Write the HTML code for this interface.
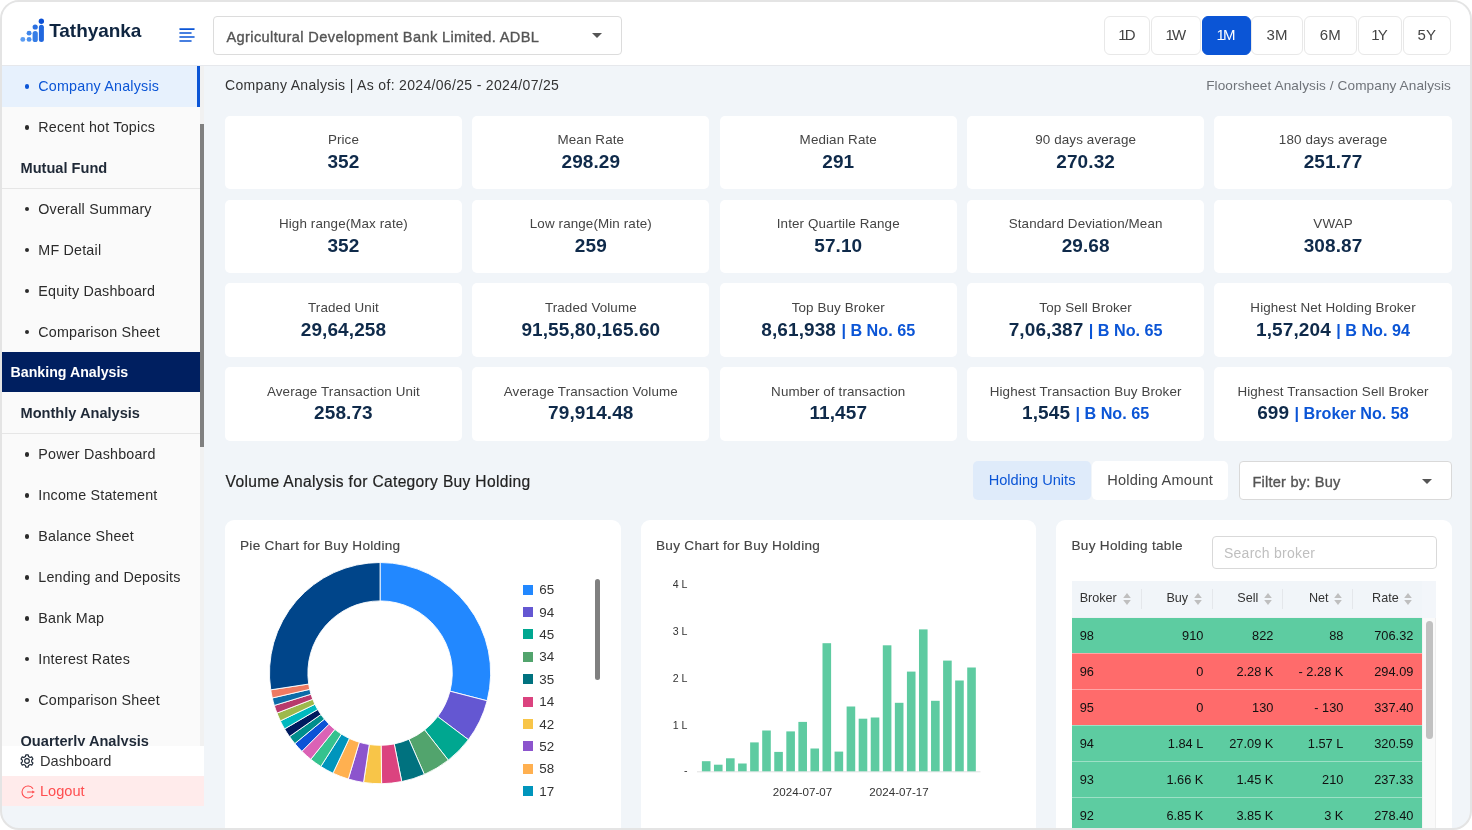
<!DOCTYPE html>
<html lang="en">
<head>
<meta charset="utf-8">
<title>Tathyanka - Company Analysis</title>
<style>
*{box-sizing:border-box;margin:0;padding:0}
html,body{width:1472px;height:830px;overflow:hidden;background:#fff;font-family:"Liberation Sans",sans-serif;color:#333}
#frame{position:absolute;left:0;top:0;width:1472px;height:830px;border:2px solid #e4e4e4;border-radius:19px;overflow:hidden;background:#f1f5f9}
#inner{position:absolute;left:-2px;top:-2px;width:1472px;height:830px;will-change:transform}
/* header */
#hdr{position:absolute;left:0;top:0;width:1472px;height:66px;background:#fff;border-bottom:1px solid #e6e8ec}
#logo{position:absolute;left:20px;top:17px;width:24px;height:26px}
#brand{position:absolute;left:49.2px;top:18.9px;font-weight:bold;font-size:19px;line-height:24px;color:#0f2540;letter-spacing:-0.05px;white-space:nowrap}
#burger{position:absolute;left:178.6px;top:28px;width:16px;height:14px;overflow:visible}
#sel{position:absolute;left:213px;top:16px;width:409px;height:38.6px;border:1px solid #dcdcdc;border-radius:4px;background:#fff}
#sel span{position:absolute;left:12.5px;top:10.5px;font-size:14.6px;line-height:18px;color:#555;-webkit-text-stroke:.35px #555;letter-spacing:.37px;white-space:nowrap}
.caret{position:absolute;width:0;height:0;border-left:5px solid transparent;border-right:5px solid transparent;border-top:5px solid #555}
.tb{position:absolute;top:15.7px;height:39.2px;border:1.2px solid #e8e8e8;border-radius:6px;background:#fff;font-size:15px;line-height:36.6px;text-align:center;color:#444}.tb u{text-decoration:none;letter-spacing:-1.9px}
.tb.on{background:#0b55d6;border-color:#0b55d6;color:#fff}
/* sidebar */
#side{position:absolute;left:2px;top:66px;width:198.3px;height:680px;background:#fafafa;overflow:hidden}
.it{position:relative;letter-spacing:.2px;height:40.93px;font-size:14.3px;line-height:41.6px;color:#2b2b2b;white-space:nowrap;padding-left:36.3px}
.it:before{content:"";position:absolute;left:22.9px;top:18.2px;width:4.4px;height:4.4px;border-radius:50%;background:#2b2b2b}
.it.act{background:#e7f1fd;color:#0b55d6}
.it.act:before{background:#0b55d6}
.it.act:after{content:"";position:absolute;right:0;top:0;width:3.7px;height:100%;background:#0b55d6}
.sec{height:40.93px;font-size:14.6px;line-height:40.95px;font-weight:bold;color:#1f2937;padding-left:18.5px;border-bottom:1px solid #e6e6e6;white-space:nowrap}
.grp{height:39.7px;margin-top:-.4px;margin-bottom:1.63px;font-size:14.2px;line-height:41.7px;font-weight:bold;color:#fff;background:#001f60;padding-left:8.5px;white-space:nowrap}
#strack{position:absolute;left:200.3px;top:66px;width:3.3px;height:680px;background:#f1f1f1}#sthumb{position:absolute;left:200.3px;top:124px;width:3.4px;height:322.7px;background:#808080}
#dash{position:absolute;left:2px;top:745.6px;width:201.5px;height:30.6px;background:#fff;font-size:14.6px;line-height:31.4px;color:#333;padding-left:38px}
#logout{position:absolute;left:2px;top:776.2px;width:201.5px;height:30.2px;background:#ffebeb;font-size:14.6px;line-height:31px;color:#ff4d4f;padding-left:38px}
#dash svg{position:absolute;left:18.4px;top:8.9px}#logout svg{position:absolute;left:18.6px;top:8.4px}
/* main */
#ttl{position:absolute;left:225px;top:75.9px;letter-spacing:.33px;font-size:14px;line-height:18px;color:#333;white-space:nowrap}
#crumb{position:absolute;right:21px;top:76.5px;letter-spacing:.1px;font-size:13.6px;line-height:18px;color:#6f7379;white-space:nowrap}
.card{position:absolute;width:237.3px;height:73.7px;background:#fff;border-radius:5px;text-align:center}
.card .l{position:absolute;left:0;width:100%;top:15.5px;letter-spacing:.12px;font-size:13.4px;line-height:18px;color:#444;white-space:nowrap}
.card .v{position:absolute;left:0;width:100%;top:34.2px;letter-spacing:.1px;font-size:19px;line-height:24px;font-weight:bold;color:#0f2a4a;white-space:nowrap}
.card .v b{color:#0b55d6;font-size:16.2px;letter-spacing:0}

/* lower */
#vt{position:absolute;left:225.6px;top:471.7px;letter-spacing:.32px;-webkit-text-stroke:.2px #222;font-size:15.6px;line-height:20px;color:#222;white-space:nowrap}
#tab1{position:absolute;left:973px;top:461.3px;width:118.1px;height:38.7px;border-radius:5px;background:#dfebfa;color:#0b55d6;font-size:14.6px;line-height:38.7px;text-align:center;white-space:nowrap}
#tab2{letter-spacing:.2px;position:absolute;left:1091.8px;top:461.3px;width:136.7px;height:38.7px;border-radius:5px;background:#fff;color:#444;font-size:14.6px;line-height:38.7px;text-align:center;white-space:nowrap}
#flt{position:absolute;left:1239px;top:461.3px;width:212.5px;height:38.7px;border:1px solid #d9d9d9;border-radius:4px;background:#fff}
#flt span{position:absolute;left:12.5px;top:10.5px;font-size:14.6px;line-height:18px;color:#555;-webkit-text-stroke:.35px #555;letter-spacing:.2px;white-space:nowrap}
.pc{position:absolute;top:520.4px;width:395.5px;height:330px;background:#fff;border-radius:9px}
.pt{position:absolute;top:536.8px;letter-spacing:.28px;-webkit-text-stroke:.15px #444;font-size:13.6px;line-height:18px;color:#444;white-space:nowrap}
.lsq{position:absolute;left:522.7px;width:10px;height:10px}
.ltx{position:absolute;left:539.3px;font-size:13.4px;line-height:16px;color:#333;white-space:nowrap}
#lscroll{position:absolute;left:595px;top:578.5px;width:5.3px;height:101.5px;border-radius:2.6px;background:#808080}
.yl{position:absolute;left:640px;width:47.5px;text-align:right;font-size:10.6px;line-height:14px;color:#333;white-space:nowrap}
.xl{position:absolute;top:784.5px;width:80px;text-align:center;font-size:11.6px;line-height:14px;color:#333;white-space:nowrap}
#srch{position:absolute;left:1211.5px;top:535.5px;width:225px;height:33px;border:1px solid #d9d9d9;border-radius:4px;background:#fff}
#srch span{position:absolute;left:11.5px;top:7px;letter-spacing:.25px;font-size:14px;line-height:18px;color:#bfbfbf;white-space:nowrap}
#thead{position:absolute;left:1071.7px;top:581.1px;width:364.6px;height:36.5px;background:#f1f5f9;border-right:14.3px solid #f3f6fa}
.th{position:absolute;top:581.1px;width:70.2px;height:36.5px;font-size:12.6px;line-height:35px;color:#333;white-space:nowrap}
.th.l span{position:absolute;left:8px}
.th.r span{position:absolute;right:24px}
.th .srt{position:absolute;right:10.5px;top:11.6px}
.thd{position:absolute;top:588.5px;width:1px;height:20px;background:#e4e7eb}
#tscroll{position:absolute;left:1421.9px;top:617.6px;width:14.4px;height:220px;background:#fafafa;border-left:1px solid #f3f3f3;border-right:1px solid #efefef}
#tscroll i{position:absolute;left:3.2px;top:3.5px;width:7.2px;height:117.5px;border-radius:3.6px;background:#c1c1c1}
.tr{position:absolute;left:1071.7px;width:350.2px;height:35.85px;font-size:12.8px;line-height:35.4px;color:#111;border-top:1px solid rgba(255,255,255,.4);white-space:nowrap}
.tr.g{background:#5dcca1}
.tr.r{background:#ff6b6b}
.tr span{position:absolute;top:0}
.tr .c0{left:8px}
.tr .c1{right:218.5px}
.tr .c2{right:148.5px}
.tr .c3{right:78.5px}
.tr .c4{right:8.5px}
</style>
</head>
<body>
<div id="frame"><div id="inner">

<div id="hdr">
  <svg id="logo" viewBox="0 0 24 26"><circle cx="2.8" cy="22.4" r="2.45" fill="#5a9cf3"/><circle cx="9.1" cy="22.4" r="2.45" fill="#4a90ee"/><circle cx="9.1" cy="16.15" r="2.45" fill="#3f86ea"/><rect x="12.6" y="14" width="5.2" height="11.1" rx="2.6" fill="#357de6"/><circle cx="15.2" cy="10" r="2.6" fill="#2a6fe1"/><rect x="18.9" y="7.7" width="5" height="17.4" rx="2.5" fill="#2167de"/><circle cx="21.4" cy="4.2" r="2.7" fill="#0a4fd5"/></svg>
  <div id="brand">Tathyanka</div>
  <svg id="burger" viewBox="0 0 16 14"><g stroke="#0b55d6" stroke-width="1.6" stroke-linecap="round"><path d="M1 1.1H15M1 5.05H12M1 9H15M1 12.95H12"/></g></svg>
  <div id="sel"><span>Agricultural Development Bank Limited. ADBL</span><i class="caret" style="left:378.2px;top:16.2px"></i></div>
  <div class="tb" style="left:1103.6px;width:46.5px"><u>1</u>D</div>
  <div class="tb" style="left:1150.5px;width:50.8px"><u>1</u>W</div>
  <div class="tb on" style="left:1201.6px;width:49px"><u>1</u>M</div>
  <div class="tb" style="left:1251px;width:52px">3M</div>
  <div class="tb" style="left:1304px;width:52.5px">6M</div>
  <div class="tb" style="left:1357.5px;width:44px"><u>1</u>Y</div>
  <div class="tb" style="left:1402.5px;width:48.5px">5Y</div>
</div>

<div id="side">
  <div class="it act">Company Analysis</div>
  <div class="it">Recent hot Topics</div>
  <div class="sec">Mutual Fund</div>
  <div class="it">Overall Summary</div>
  <div class="it">MF Detail</div>
  <div class="it">Equity Dashboard</div>
  <div class="it">Comparison Sheet</div>
  <div class="grp">Banking Analysis</div>
  <div class="sec">Monthly Analysis</div>
  <div class="it">Power Dashboard</div>
  <div class="it">Income Statement</div>
  <div class="it">Balance Sheet</div>
  <div class="it">Lending and Deposits</div>
  <div class="it">Bank Map</div>
  <div class="it">Interest Rates</div>
  <div class="it">Comparison Sheet</div>
  <div class="sec" style="border:0">Quarterly Analysis</div>
</div>
<div id="strack"></div><div id="sthumb"></div>
<div id="dash"><svg width="14" height="14" viewBox="0 0 14 14" fill="none" stroke="#1f2937" stroke-width="1.15" stroke-linejoin="round"><path d="M5.45 2.51L5.80 0.82L8.20 0.82L8.55 2.51L10.12 3.42L11.75 2.87L12.96 4.95L11.66 6.09L11.66 7.91L12.96 9.05L11.75 11.13L10.12 10.58L8.55 11.49L8.20 13.18L5.80 13.18L5.45 11.49L3.88 10.58L2.25 11.13L1.04 9.05L2.34 7.91L2.34 6.09L1.04 4.95L2.25 2.87L3.88 3.42Z"/><circle cx="7" cy="7" r="2.35"/></svg>Dashboard</div>
<div id="logout"><svg width="15" height="14" viewBox="0 0 15 14" fill="none" stroke="#ff4d4f" stroke-width="1.1" stroke-linecap="round"><path d="M11.73 3.31A6.0 6.0 0 1 0 11.73 10.69"/><path d="M6.5 7H12"/><path d="M11.2 5.4L14 7L11.2 8.6Z" fill="#ff4d4f" stroke="none"/></svg>Logout</div>

<div id="ttl">Company Analysis | As of: 2024/06/25 - 2024/07/25</div>
<div id="crumb">Floorsheet Analysis / Company Analysis</div>

<div class="card" style="left:224.8px;top:115.8px"><div class="l">Price</div><div class="v">352</div></div>
<div class="card" style="left:472.2px;top:115.8px"><div class="l">Mean Rate</div><div class="v">298.29</div></div>
<div class="card" style="left:719.6px;top:115.8px"><div class="l">Median Rate</div><div class="v">291</div></div>
<div class="card" style="left:967.0px;top:115.8px"><div class="l">90 days average</div><div class="v">270.32</div></div>
<div class="card" style="left:1214.4px;top:115.8px"><div class="l">180 days average</div><div class="v">251.77</div></div>
<div class="card" style="left:224.8px;top:199.6px"><div class="l">High range(Max rate)</div><div class="v">352</div></div>
<div class="card" style="left:472.2px;top:199.6px"><div class="l">Low range(Min rate)</div><div class="v">259</div></div>
<div class="card" style="left:719.6px;top:199.6px"><div class="l">Inter Quartile Range</div><div class="v">57.10</div></div>
<div class="card" style="left:967.0px;top:199.6px"><div class="l">Standard Deviation/Mean</div><div class="v">29.68</div></div>
<div class="card" style="left:1214.4px;top:199.6px"><div class="l">VWAP</div><div class="v">308.87</div></div>
<div class="card" style="left:224.8px;top:283.4px"><div class="l">Traded Unit</div><div class="v">29,64,258</div></div>
<div class="card" style="left:472.2px;top:283.4px"><div class="l">Traded Volume</div><div class="v">91,55,80,165.60</div></div>
<div class="card" style="left:719.6px;top:283.4px"><div class="l">Top Buy Broker</div><div class="v">8,61,938 <b>| B No. 65</b></div></div>
<div class="card" style="left:967.0px;top:283.4px"><div class="l">Top Sell Broker</div><div class="v">7,06,387 <b>| B No. 65</b></div></div>
<div class="card" style="left:1214.4px;top:283.4px"><div class="l">Highest Net Holding Broker</div><div class="v">1,57,204 <b>| B No. 94</b></div></div>
<div class="card" style="left:224.8px;top:367.2px"><div class="l">Average Transaction Unit</div><div class="v">258.73</div></div>
<div class="card" style="left:472.2px;top:367.2px"><div class="l">Average Transaction Volume</div><div class="v">79,914.48</div></div>
<div class="card" style="left:719.6px;top:367.2px"><div class="l">Number of transaction</div><div class="v">11,457</div></div>
<div class="card" style="left:967.0px;top:367.2px"><div class="l">Highest Transaction Buy Broker</div><div class="v">1,545 <b>| B No. 65</b></div></div>
<div class="card" style="left:1214.4px;top:367.2px"><div class="l">Highest Transaction Sell Broker</div><div class="v">699 <b>| Broker No. 58</b></div></div>


<div id="vt">Volume Analysis for Category Buy Holding</div>
<div id="tab1">Holding Units</div><div id="tab2">Holding Amount</div>
<div id="flt"><span>Filter by: Buy</span><i class="caret" style="left:182.2px;top:17px"></i></div>
<div class="pc" style="left:225px"></div><div class="pc" style="left:640.5px"></div><div class="pc" style="left:1056px"></div>
<div class="pt" style="left:240px">Pie Chart for Buy Holding</div>
<div class="pt" style="left:656px">Buy Chart for Buy Holding</div>
<div class="pt" style="left:1071.5px">Buy Holding table</div>
<svg id="donut" width="1472" height="830" style="position:absolute;left:0;top:0" stroke="#fff" stroke-width="0.9" stroke-linejoin="round"><path d="M380.07 562.50A110.6 110.6 0 0 1 487.15 700.79L449.97 691.18A72.2 72.2 0 0 0 380.07 600.90Z" fill="#2288ff"/><path d="M487.15 700.79A110.6 110.6 0 0 1 468.40 739.66L437.73 716.55A72.2 72.2 0 0 0 449.97 691.18Z" fill="#6457d2"/><path d="M468.40 739.66A110.6 110.6 0 0 1 448.31 760.14L424.62 729.92A72.2 72.2 0 0 0 437.73 716.55Z" fill="#00a790"/><path d="M448.31 760.14A110.6 110.6 0 0 1 424.35 774.45L408.98 739.26A72.2 72.2 0 0 0 424.62 729.92Z" fill="#52a46d"/><path d="M424.35 774.45A110.6 110.6 0 0 1 401.74 781.56L394.22 743.90A72.2 72.2 0 0 0 408.98 739.26Z" fill="#00727f"/><path d="M401.74 781.56A110.6 110.6 0 0 1 381.61 783.69L381.08 745.29A72.2 72.2 0 0 0 394.22 743.90Z" fill="#db437f"/><path d="M381.61 783.69A110.6 110.6 0 0 1 363.53 782.46L369.27 744.49A72.2 72.2 0 0 0 381.08 745.29Z" fill="#f8c548"/><path d="M363.53 782.46A110.6 110.6 0 0 1 348.29 779.04L359.32 742.25A72.2 72.2 0 0 0 369.27 744.49Z" fill="#8c54cd"/><path d="M348.29 779.04A110.6 110.6 0 0 1 332.98 773.17L349.33 738.43A72.2 72.2 0 0 0 359.32 742.25Z" fill="#ffb050"/><path d="M332.98 773.17A110.6 110.6 0 0 1 320.81 766.48L341.38 734.06A72.2 72.2 0 0 0 349.33 738.43Z" fill="#0095bc"/><path d="M320.81 766.48A110.6 110.6 0 0 1 310.77 759.29L334.83 729.37A72.2 72.2 0 0 0 341.38 734.06Z" fill="#35c28e"/><path d="M310.77 759.29A110.6 110.6 0 0 1 301.86 751.31L329.02 724.15A72.2 72.2 0 0 0 334.83 729.37Z" fill="#db62b5"/><path d="M301.86 751.31A110.6 110.6 0 0 1 294.85 743.60L324.44 719.12A72.2 72.2 0 0 0 329.02 724.15Z" fill="#0d52d6"/><path d="M294.85 743.60A110.6 110.6 0 0 1 289.47 736.54L320.93 714.51A72.2 72.2 0 0 0 324.44 719.12Z" fill="#008e8c"/><path d="M289.47 736.54A110.6 110.6 0 0 1 284.58 728.90L317.73 709.53A72.2 72.2 0 0 0 320.93 714.51Z" fill="#001a5e"/><path d="M284.58 728.90A110.6 110.6 0 0 1 280.33 720.89L314.96 704.30A72.2 72.2 0 0 0 317.73 709.53Z" fill="#00b9bf"/><path d="M280.33 720.89A110.6 110.6 0 0 1 276.95 713.10L312.76 699.21A72.2 72.2 0 0 0 314.96 704.30Z" fill="#9db94c"/><path d="M276.95 713.10A110.6 110.6 0 0 1 274.30 705.44L311.02 694.21A72.2 72.2 0 0 0 312.76 699.21Z" fill="#b73a6c"/><path d="M274.30 705.44A110.6 110.6 0 0 1 272.30 697.98L309.72 689.34A72.2 72.2 0 0 0 311.02 694.21Z" fill="#0b6ca8"/><path d="M272.30 697.98A110.6 110.6 0 0 1 270.74 689.83L308.70 684.02A72.2 72.2 0 0 0 309.72 689.34Z" fill="#ee7a62"/><path d="M270.74 689.83A110.6 110.6 0 0 1 380.07 562.50L380.07 600.90A72.2 72.2 0 0 0 308.70 684.02Z" fill="#00458a"/></svg>
<i class="lsq" style="top:584.65px;background:#2288ff"></i><span class="ltx" style="top:582.15px">65</span><i class="lsq" style="top:607.05px;background:#6457d2"></i><span class="ltx" style="top:604.55px">94</span><i class="lsq" style="top:629.45px;background:#00a790"></i><span class="ltx" style="top:626.95px">45</span><i class="lsq" style="top:651.85px;background:#52a46d"></i><span class="ltx" style="top:649.35px">34</span><i class="lsq" style="top:674.25px;background:#00727f"></i><span class="ltx" style="top:671.75px">35</span><i class="lsq" style="top:696.65px;background:#db437f"></i><span class="ltx" style="top:694.15px">14</span><i class="lsq" style="top:719.05px;background:#f8c548"></i><span class="ltx" style="top:716.55px">42</span><i class="lsq" style="top:741.45px;background:#8c54cd"></i><span class="ltx" style="top:738.95px">52</span><i class="lsq" style="top:763.85px;background:#ffb050"></i><span class="ltx" style="top:761.35px">58</span><i class="lsq" style="top:786.25px;background:#0095bc"></i><span class="ltx" style="top:783.75px">17</span>
<i id="lscroll"></i>
<svg width="1472" height="830" style="position:absolute;left:0;top:0"><path d="M697 771.8H980.5" stroke="#e2e2e2" stroke-width="1"/><g fill="#5ecba1"><rect x="701.90" y="761.20" width="8.6" height="10.10"/><rect x="713.96" y="764.70" width="8.6" height="6.60"/><rect x="726.02" y="758.30" width="8.6" height="13.00"/><rect x="738.08" y="763.50" width="8.6" height="7.80"/><rect x="750.14" y="742.40" width="8.6" height="28.90"/><rect x="762.20" y="730.50" width="8.6" height="40.80"/><rect x="774.26" y="751.90" width="8.6" height="19.40"/><rect x="786.32" y="731.40" width="8.6" height="39.90"/><rect x="798.38" y="721.90" width="8.6" height="49.40"/><rect x="810.44" y="748.50" width="8.6" height="22.80"/><rect x="822.50" y="643.20" width="8.6" height="128.10"/><rect x="834.56" y="751.60" width="8.6" height="19.70"/><rect x="846.62" y="706.50" width="8.6" height="64.80"/><rect x="858.68" y="718.70" width="8.6" height="52.60"/><rect x="870.74" y="717.50" width="8.6" height="53.80"/><rect x="882.80" y="645.30" width="8.6" height="126.00"/><rect x="894.86" y="702.80" width="8.6" height="68.50"/><rect x="906.92" y="671.60" width="8.6" height="99.70"/><rect x="918.98" y="629.40" width="8.6" height="141.90"/><rect x="931.04" y="700.80" width="8.6" height="70.50"/><rect x="943.10" y="660.60" width="8.6" height="110.70"/><rect x="955.16" y="680.50" width="8.6" height="90.80"/><rect x="967.22" y="667.50" width="8.6" height="103.80"/></g></svg><span class="yl" style="top:576.9px">4 L</span><span class="yl" style="top:623.8px">3 L</span><span class="yl" style="top:670.7px">2 L</span><span class="yl" style="top:717.6px">1 L</span><span class="yl" style="top:763.3px">-</span><span class="xl" style="left:762.5px">2024-07-07</span><span class="xl" style="left:859px">2024-07-17</span>
<div id="srch"><span>Search broker</span></div>
<div id="thead"></div><div class="th l" style="left:1071.7px"><span>Broker</span><svg class="srt" width="8" height="12" viewBox="0 0 8 12"><path d="M4 0L7.8 5.1H0.2Z M4 12L7.8 7.1H0.2Z" fill="#bfbfbf"/></svg></div><i class="thd" style="left:1141.4px"></i><div class="th r" style="left:1141.9px"><span>Buy</span><svg class="srt" width="8" height="12" viewBox="0 0 8 12"><path d="M4 0L7.8 5.1H0.2Z M4 12L7.8 7.1H0.2Z" fill="#bfbfbf"/></svg></div><i class="thd" style="left:1211.6px"></i><div class="th r" style="left:1212.1px"><span>Sell</span><svg class="srt" width="8" height="12" viewBox="0 0 8 12"><path d="M4 0L7.8 5.1H0.2Z M4 12L7.8 7.1H0.2Z" fill="#bfbfbf"/></svg></div><i class="thd" style="left:1281.8px"></i><div class="th r" style="left:1282.3px"><span>Net</span><svg class="srt" width="8" height="12" viewBox="0 0 8 12"><path d="M4 0L7.8 5.1H0.2Z M4 12L7.8 7.1H0.2Z" fill="#bfbfbf"/></svg></div><i class="thd" style="left:1352.0px"></i><div class="th r" style="left:1352.5px"><span>Rate</span><svg class="srt" width="8" height="12" viewBox="0 0 8 12"><path d="M4 0L7.8 5.1H0.2Z M4 12L7.8 7.1H0.2Z" fill="#bfbfbf"/></svg></div>
<div id="tscroll"><i></i></div>
<div class="tr g" style="top:617.45px;border-top-color:#eef1f4"><span class="c0">98</span><span class="c1">910</span><span class="c2">822</span><span class="c3">88</span><span class="c4">706.32</span></div><div class="tr r" style="top:653.30px"><span class="c0">96</span><span class="c1">0</span><span class="c2">2.28 K</span><span class="c3">- 2.28 K</span><span class="c4">294.09</span></div><div class="tr r" style="top:689.15px"><span class="c0">95</span><span class="c1">0</span><span class="c2">130</span><span class="c3">- 130</span><span class="c4">337.40</span></div><div class="tr g" style="top:725.00px"><span class="c0">94</span><span class="c1">1.84 L</span><span class="c2">27.09 K</span><span class="c3">1.57 L</span><span class="c4">320.59</span></div><div class="tr g" style="top:760.85px"><span class="c0">93</span><span class="c1">1.66 K</span><span class="c2">1.45 K</span><span class="c3">210</span><span class="c4">237.33</span></div><div class="tr g" style="top:796.70px"><span class="c0">92</span><span class="c1">6.85 K</span><span class="c2">3.85 K</span><span class="c3">3 K</span><span class="c4">278.40</span></div>


</div></div>
</body>
</html>
